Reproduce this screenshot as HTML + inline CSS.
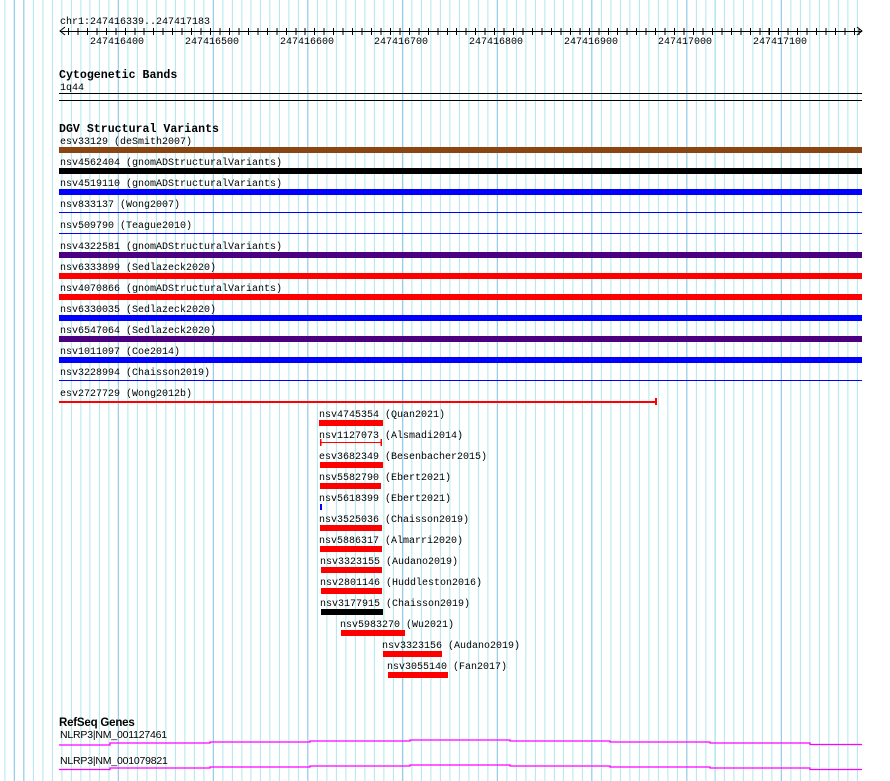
<!DOCTYPE html>
<html><head><meta charset="utf-8"><style>
html,body{margin:0;padding:0;background:#fff;}
body{width:890px;height:781px;position:relative;overflow:hidden;font-family:"Liberation Mono",monospace;}
.g{position:absolute;left:0;top:0;width:862px;height:781px;
background:repeating-linear-gradient(to right,#aee8ee 0,#aee8ee 1px,transparent 1px,transparent 9.47px);
background-position:4.4px 0;}
.gm{position:absolute;left:0;top:0;width:862px;height:781px;
background:repeating-linear-gradient(to right,#8cc6ea 0,#8cc6ea 1px,transparent 1px,transparent 94.7px);
background-position:23.3px 0;}
.t{position:absolute;font-size:10px;line-height:10px;white-space:pre;color:#000;transform:translateY(3px);}
.h{position:absolute;font-size:11.6px;font-weight:bold;line-height:12px;white-space:pre;transform:translateY(2px);}
.b{position:absolute;height:6px;}
.l{position:absolute;height:1px;}
.ticks{position:absolute;left:60px;top:28px;width:800px;height:7px;
background:repeating-linear-gradient(to right,#000 0,#000 1px,transparent 1px,transparent 9.47px);background-position:-1.5px 0;}
.s{font-family:"Liberation Sans",sans-serif;}
</style></head><body>
<div class="g"></div><div class="gm"></div>
<div class="t" style="left:60px;top:15px">chr1:247416339..247417183</div>
<div class="l" style="left:60px;top:31px;width:802px;background:#000"></div>
<div class="ticks"></div>
<svg style="position:absolute;left:0;top:0" width="890" height="781">
<polyline points="65,27 60,31 65,35" fill="none" stroke="#000"/>
<polyline points="857,27 862,31 857,35" fill="none" stroke="#000"/>
<rect x="655" y="398" width="2" height="7" fill="#f00"/>
<rect x="320" y="439" width="1.5" height="7" fill="#f00"/>
<rect x="380.5" y="439" width="1.5" height="7" fill="#f00"/>
<polyline points="59,745 110,745 110,743 210,743 210,742 310,742 310,741 410,741 410,740 510,740 510,741 610,741 610,742 710,742 710,743 810,743 810,744.5 862,744.5" fill="none" stroke="#f0f" stroke-width="1.3"/>
<polyline points="59,769.5 110,769.5 110,768 210,768 210,767 310,767 310,766 410,766 410,765 510,765 510,766 610,766 610,767 710,767 710,768 810,768 810,769.5 862,769.5" fill="none" stroke="#f0f" stroke-width="1.3"/>
</svg>
<div class="t" style="left:90px;top:35px">247416400</div>
<div class="t" style="left:185px;top:35px">247416500</div>
<div class="t" style="left:280px;top:35px">247416600</div>
<div class="t" style="left:374px;top:35px">247416700</div>
<div class="t" style="left:469px;top:35px">247416800</div>
<div class="t" style="left:564px;top:35px">247416900</div>
<div class="t" style="left:658px;top:35px">247417000</div>
<div class="t" style="left:753px;top:35px">247417100</div>

<div class="h" style="left:59px;top:68px">Cytogenetic Bands</div>
<div class="t" style="left:60px;top:81px">1q44</div>
<div class="l" style="left:59px;top:93px;width:803px;background:#000"></div>
<div class="l" style="left:59px;top:100px;width:803px;background:#000"></div>

<div class="h" style="left:59px;top:122px">DGV Structural Variants</div>
<div class="t" style="left:60px;top:135px">esv33129 (deSmith2007)</div>
<div class="b" style="left:59px;top:147px;width:803px;background:#8b4513"></div>
<div class="t" style="left:60px;top:156px">nsv4562404 (gnomADStructuralVariants)</div>
<div class="b" style="left:59px;top:168px;width:803px;background:#000"></div>
<div class="t" style="left:60px;top:177px">nsv4519110 (gnomADStructuralVariants)</div>
<div class="b" style="left:59px;top:189px;width:803px;background:#00f"></div>
<div class="t" style="left:60px;top:198px">nsv833137 (Wong2007)</div>
<div class="l" style="left:59px;top:212px;width:803px;background:#00f"></div>
<div class="t" style="left:60px;top:219px">nsv509790 (Teague2010)</div>
<div class="l" style="left:59px;top:233px;width:803px;background:#00f"></div>
<div class="t" style="left:60px;top:240px">nsv4322581 (gnomADStructuralVariants)</div>
<div class="b" style="left:59px;top:252px;width:803px;background:#4b0082"></div>
<div class="t" style="left:60px;top:261px">nsv6333899 (Sedlazeck2020)</div>
<div class="b" style="left:59px;top:273px;width:803px;background:#f00"></div>
<div class="t" style="left:60px;top:282px">nsv4070866 (gnomADStructuralVariants)</div>
<div class="b" style="left:59px;top:294px;width:803px;background:#f00"></div>
<div class="t" style="left:60px;top:303px">nsv6330035 (Sedlazeck2020)</div>
<div class="b" style="left:59px;top:315px;width:803px;background:#00f"></div>
<div class="t" style="left:60px;top:324px">nsv6547064 (Sedlazeck2020)</div>
<div class="b" style="left:59px;top:336px;width:803px;background:#4b0082"></div>
<div class="t" style="left:60px;top:345px">nsv1011097 (Coe2014)</div>
<div class="b" style="left:59px;top:357px;width:803px;background:#00f"></div>
<div class="t" style="left:60px;top:366px">nsv3228994 (Chaisson2019)</div>
<div class="l" style="left:59px;top:380px;width:803px;background:#00f"></div>
<div class="t" style="left:60px;top:387px">esv2727729 (Wong2012b)</div>
<div class="l" style="left:59px;top:401px;width:597px;height:1.5px;background:#f00"></div>

<div class="t" style="left:319px;top:408px">nsv4745354 (Quan2021)</div>
<div class="b" style="left:319px;top:420px;width:64px;background:#f00"></div>
<div class="t" style="left:319px;top:429px">nsv1127073 (Alsmadi2014)</div>
<div class="l" style="left:320px;top:442px;width:62px;background:#f00"></div>
<div class="t" style="left:319px;top:450px">esv3682349 (Besenbacher2015)</div>
<div class="b" style="left:320px;top:462px;width:63px;background:#f00"></div>
<div class="t" style="left:319px;top:471px">nsv5582790 (Ebert2021)</div>
<div class="b" style="left:320px;top:483px;width:61px;background:#f00"></div>
<div class="t" style="left:319px;top:492px">nsv5618399 (Ebert2021)</div>
<div class="b" style="left:320px;top:504px;width:2px;background:#00f"></div>
<div class="t" style="left:319px;top:513px">nsv3525036 (Chaisson2019)</div>
<div class="b" style="left:320px;top:525px;width:62px;background:#f00"></div>
<div class="t" style="left:319px;top:534px">nsv5886317 (Almarri2020)</div>
<div class="b" style="left:320px;top:546px;width:62px;background:#f00"></div>
<div class="t" style="left:320px;top:555px">nsv3323155 (Audano2019)</div>
<div class="b" style="left:321px;top:567px;width:61px;background:#f00"></div>
<div class="t" style="left:320px;top:576px">nsv2801146 (Huddleston2016)</div>
<div class="b" style="left:321px;top:588px;width:61px;background:#f00"></div>
<div class="t" style="left:320px;top:597px">nsv3177915 (Chaisson2019)</div>
<div class="b" style="left:321px;top:609px;width:62px;background:#000"></div>
<div class="t" style="left:340px;top:618px">nsv5983270 (Wu2021)</div>
<div class="b" style="left:341px;top:630px;width:64px;background:#f00"></div>
<div class="t" style="left:382px;top:639px">nsv3323156 (Audano2019)</div>
<div class="b" style="left:383px;top:651px;width:59px;background:#f00"></div>
<div class="t" style="left:387px;top:660px">nsv3055140 (Fan2017)</div>
<div class="b" style="left:388px;top:672px;width:60px;background:#f00"></div>

<div class="h s" style="left:59px;top:715px;font-size:11.5px;letter-spacing:-0.2px">RefSeq Genes</div>
<div class="t s" style="left:60px;top:727px;font-size:10.5px;letter-spacing:-0.2px">NLRP3|NM_001127461</div>
<div class="t s" style="left:60px;top:753px;font-size:10.5px;letter-spacing:-0.2px">NLRP3|NM_001079821</div>
</body></html>
